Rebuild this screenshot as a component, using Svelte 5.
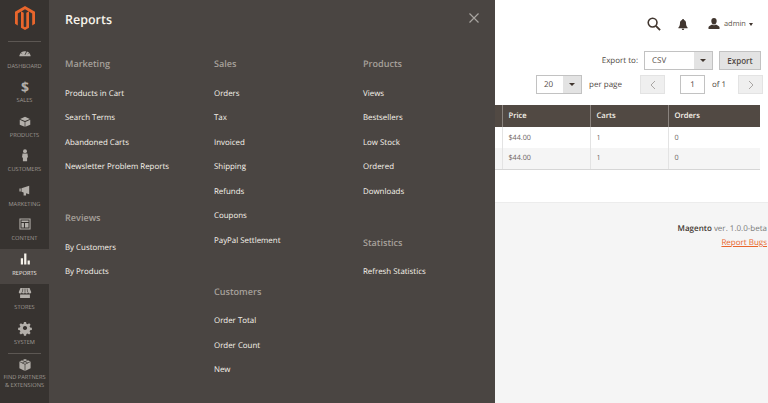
<script>
  const cols = [
    [
      { title: 'Marketing', links: ['Products in Cart', 'Search Terms', 'Abandoned Carts', 'Newsletter Problem Reports'] },
      { title: 'Reviews', links: ['By Customers', 'By Products'] }
    ],
    [
      { title: 'Sales', links: ['Orders', 'Tax', 'Invoiced', 'Shipping', 'Refunds', 'Coupons', 'PayPal Settlement'] },
      { title: 'Customers', links: ['Order Total', 'Order Count', 'New'] }
    ],
    [
      { title: 'Products', links: ['Views', 'Bestsellers', 'Low Stock', 'Ordered', 'Downloads'] },
      { title: 'Statistics', links: ['Refresh Statistics'] }
    ]
  ];
  const nav = ['dashboard', 'sales', 'products', 'customers', 'marketing', 'content', 'reports', 'stores', 'system'];
  const rows = [0, 1];
</script>

<div class="page">
  <aside class="side">
    <div class="logo">
      <svg width="20" height="24" viewBox="0 0 20 24"><path fill="#e9662c" d="M10 0 20 5.800v12L17.200 19.400V7.400L10 3.200 2.800 7.400v12L0 17.800V5.800z"/><path fill="#e9662c" d="M8.700 6.700v13.800L10 21.300l1.300-.8V6.700l2.700-1.500v16.600L10 24l-4-2.200V5.200z"/></svg>
    </div>
    {#each nav as n}
      <div class="nav" class:active={n === 'reports'}>
        <svg class="ico" viewBox="0 0 20 20">
          {#if n === 'dashboard'}
            <path fill="currentColor" d="M2 15a8.300 8.300 0 0 1 16 0v1H2z"/><path stroke="#373330" stroke-width="1.300" d="M10 14l3-6M5 12l1 .6M15 12l-1 .6"/>
          {:else if n === 'sales'}
            <text x="10" y="18" text-anchor="middle" class="dollar">$</text>
          {:else if n === 'products'}
            <path fill="currentColor" d="M10 4l7 3-7 3-7-3zM2.500 8.300l7 3v7l-7-3zM17.500 8.300l-7 3v7l7-3z"/>
          {:else if n === 'customers'}
            <circle cx="10" cy="4.500" r="2.800" fill="currentColor"/><path fill="currentColor" d="M6.500 8h7l.8 5.500h-1.300V19H7v-5.500H5.700z"/>
          {:else if n === 'marketing'}
            <path fill="currentColor" d="M2 8h2v4H2zM5 7.500 16 4v12l-4.500-1.500V18H8v-4.500L5 12.500z"/>
          {:else if n === 'content'}
            <path fill="none" stroke="currentColor" stroke-width="1.500" d="M2.800 2.800h14.400v14.400H2.800z"/><path fill="currentColor" d="M5 5h10v2H5zM5 8.500h3.500V15H5zM10 8.500h5V15h-5z"/>
          {:else if n === 'reports'}
            <path fill="currentColor" d="M4 9h3.200v9H4zM8.800 2H12v16H8.800zM13.700 12h3.200v6h-3.200z"/>
          {:else if n === 'stores'}
            <path fill="currentColor" d="M3.500 3h13l2.500 6a2.300 2.300 0 0 1-4.500 0 2.300 2.300 0 0 1-4.500 0 2.300 2.300 0 0 1-4.500 0A2.300 2.300 0 0 1 1 9zM3 12h14v5H3z"/><path stroke="#373330" stroke-width=".9" d="M7 3.500 6.200 9M10 3.500V9M13 3.500l.8 5.500"/>
          {:else}
            <path fill="currentColor" fill-rule="evenodd" d="M8.500 1.500h3l.5 2.500 1.700.7 2.200-1.400 2.100 2.100-1.400 2.200.7 1.700 2.500.5v3l-2.500.5-.7 1.700 1.400 2.200-2.100 2.100-2.200-1.400-1.700.7-.5 2.500h-3l-.5-2.500-1.700-.7-2.200 1.400-2.100-2.100 1.400-2.200-.7-1.700-2.500-.5v-3l2.500-.5.7-1.700-1.400-2.200 2.100-2.100 2.200 1.400 1.700-.7zM10 7a3 3 0 1 0 .01 0z"/>
          {/if}
        </svg>
        <span>{n.toUpperCase()}</span>
      </div>
    {/each}
    <div class="nav partners">
      <svg class="ico" viewBox="0 0 20 20"><path fill="currentColor" d="M10 1.500 18 5v9.500L10 18.500 2 14.500V5z"/><path stroke="#373330" fill="none" d="M2 5l8 4 8-4M10 9v9.500M6 3.200l8 4M14 3.200l-8 4"/></svg>
      <span>FIND PARTNERS<br />&amp; EXTENSIONS</span>
    </div>
  </aside>

  <section class="panel">
    <header class="panel-head">
      <h2>Reports</h2>
      <svg class="close" width="10" height="10" viewBox="0 0 10 10"><path d="M.5.500l9 9M9.500.500l-9 9" stroke="#a8a4a0" stroke-width="1.200"/></svg>
    </header>
    <div class="cols">
      {#each cols as col}
        <div class="col">
          {#each col as g}
            <div class="group">
              <h3>{g.title}</h3>
              {#each g.links as l}
                <a href="#x">{l}</a>
              {/each}
            </div>
          {/each}
        </div>
      {/each}
    </div>
  </section>

  <main class="main">
    <div class="content">
      <div class="topbar">
        <svg class="search" width="14" height="14" viewBox="0 0 15 15"><circle cx="6" cy="6" r="4.700" fill="none" stroke="#41362f" stroke-width="1.700"/><path d="M9.500 9.500l4.500 4.500" stroke="#41362f" stroke-width="2"/></svg>
        <svg class="bell" width="10" height="11" viewBox="0 0 10 11"><path fill="#41362f" d="M5 0c.6 0 1 .4 1 .9C7.500 1.300 8 2.500 8 4c0 2.500.6 3.500 1.600 4.500v.7H.4v-.7C1.400 7.500 2 6.500 2 4 2 2.500 2.500 1.300 4 .9 4 .4 4.400 0 5 0zM3.800 9.700h2.400C6.200 10.400 5.700 11 5 11s-1.200-.6-1.200-1.300z"/></svg>
        <svg class="user" width="12" height="12" viewBox="0 0 12 12"><path fill="#41362f" d="M6 0c1.700 0 2.700 1.200 2.700 3S7.700 6.500 6 6.500 3.300 4.800 3.300 3 4.300 0 6 0zM4 6.500c1.200 1 2.800 1 4 0 .6.700 3 1.300 3.500 2.500v2H.5V9C1 7.800 3.400 7.200 4 6.500z"/></svg>
        <span class="uname">admin</span>
        <i class="caret small"></i>
      </div>

      <div class="export">
        <span>Export to:</span>
        <div class="select csv"><b>CSV</b><em><i class="caret"></i></em></div>
        <button class="btn">Export</button>
      </div>

      <div class="pager">
        <div class="select per"><b>20</b><em><i class="caret"></i></em></div>
        <span class="pp">per page</span>
        <div class="arrow"><svg width="6" height="10" viewBox="0 0 6 10"><path d="M5 1 1 5l4 4" fill="none" stroke="#a9a6a4"/></svg></div>
        <div class="pageno">1</div>
        <span class="of">of 1</span>
        <div class="arrow next"><svg width="6" height="10" viewBox="0 0 6 10"><path d="m1 1 4 4-4 4" fill="none" stroke="#a9a6a4"/></svg></div>
      </div>

      <table>
        <thead><tr><th class="stub"></th><th class="p">Price</th><th class="c">Carts</th><th class="o">Orders</th></tr></thead>
        <tbody>
          {#each rows as r}
            <tr class:alt={r === 1}><td class="stub"></td><td>$44.00</td><td>1</td><td>0</td></tr>
          {/each}
        </tbody>
      </table>
    </div>
    <footer>
      <p><strong>Magento</strong> ver. 1.0.0-beta</p>
      <a href="#x">Report Bugs</a>
    </footer>
  </main>
</div>

<style>
  :global(body) { margin: 0; background: #fff; }
  .page {
    width: 768px; height: 403px; overflow: hidden; display: flex;
    font-family: "Open Sans", "Noto Sans", sans-serif; color: #41362f;
    text-rendering: geometricPrecision;
  }
  .side { width: 49px; flex: none; background: #373330; display: flex; flex-direction: column; align-items: stretch; }
  .logo { height: 42px; margin: 0 8px; display: flex; justify-content: center; align-items: flex-start; padding-top: 6px; box-sizing: border-box; border-bottom: 1px solid #5c5753; flex: none; }
  .nav {
    height: 34.5px; flex: none; display: flex; flex-direction: column; align-items: center; justify-content: flex-end;
    color: #a09c96; padding-bottom: 7px; box-sizing: border-box; font-size: 5.700px; line-height: 8px; text-align: center; white-space: nowrap;
  }
  .nav .ico { width: 14px; height: 14px; margin-bottom: 3px; color: #b3afaa; overflow: visible; }
  .nav.active { background: #4a4542; color: #f7f3eb; }
  .nav.active .ico { color: #f7f3eb; }
  .dollar { font: 700 20px "Open Sans", sans-serif; fill: currentColor; }
  .partners { height: 44px; justify-content: flex-start; padding-top: 5px; padding-bottom: 0; position: relative; }
  .partners::before { content: ""; position: absolute; top: 0; left: 8px; right: 8px; height: 1px; background: #5c5753; }
  .partners .ico { margin-bottom: 1px; }

  .panel { width: 446px; flex: none; background: #4a4542; box-sizing: border-box; padding: 0 16px; }
  .panel-head { height: 38px; display: flex; justify-content: space-between; align-items: center; }
  .panel-head h2 { margin: 0; font-size: 12.500px; font-weight: 600; color: #f7f3eb; }
  .close { margin-top: -2px; }
  .cols { display: flex; padding-top: 16px; }
  .col { width: 149px; flex: none; }
  .group { margin-bottom: 28.500px; }
  .group h3 { margin: 0 0 7.500px; height: 20px; line-height: 20px; font-size: 9.100px; font-weight: 600; color: #a6a09a; }
  .group a { display: block; height: 24.500px; line-height: 24.500px; font-size: 7.900px; color: #f7f3eb; text-decoration: none; white-space: nowrap; }

  .main { flex: 1; min-width: 0; display: flex; flex-direction: column; }
  .content { height: 202px; flex: none; box-sizing: border-box; }
  .topbar { height: 47px; display: flex; align-items: center; padding: 1px 0 0 152px; box-sizing: border-box; }
  .search { margin-right: 17px; }
  .bell { margin-right: 20px; }
  .user { margin-right: 4px; }
  .uname { font-size: 7.400px; color: #5c5249; margin-right: 3px; }
  .caret { display: block; width: 0; height: 0; border: 3px solid transparent; border-top: 3.500px solid #41362f; border-bottom: 0; }
  .caret.small { border-width: 2.500px; border-top-width: 3px; border-bottom-width: 0; }
  .export { display: flex; align-items: center; height: 19px; justify-content: flex-end; font-size: 8px; padding-right: 7px; margin-top: 4px; }
  .export > span { margin-right: 6px; color: #514943; }
  .select { display: flex; height: 19px; box-sizing: border-box; border: 1px solid #c2c2c2; background: #fff; font-size: 8px; color: #514943; }
  .select b { flex: 1; font-weight: 400; padding-left: 7px; line-height: 17px; }
  .select em { width: 18px; background: #e3e3e3; display: flex; align-items: center; justify-content: center; }
  .csv { width: 69px; margin-right: 6px; }
  .btn { width: 42px; height: 19px; padding: 0; background: #e3e3e3; border: 1px solid #c2c2c2; font: 600 8px "Open Sans", sans-serif; color: #514943; }
  .pager { display: flex; align-items: center; height: 19px; margin-top: 5px; padding-left: 41px; font-size: 8px; color: #514943; }
  .per { width: 46px; }
  .pp { margin-left: 7px; width: 51px; }
  .arrow { width: 25px; height: 19px; background: #efefef; border: 1px solid #e3e3e3; box-sizing: border-box; display: flex; align-items: center; justify-content: center; }
  .pageno { width: 25px; height: 19px; box-sizing: border-box; border: 1px solid #c2c2c2; text-align: center; line-height: 17px; margin-left: 15px; }
  .of { margin-left: 7px; width: 26px; }
  table { border-collapse: collapse; table-layout: fixed; width: 265px; margin-top: 11px; font-size: 7.200px; }
  th { height: 22px; background: #514943; color: #f7f3eb; font-weight: 600; font-size: 7.600px; text-align: left; padding: 0 6px; border-left: 1px solid #8a837e; box-sizing: border-box; }
  td { height: 21px; padding: 0 6px; color: #6b625c; border-left: 1px solid #e3e3e3; box-sizing: border-box; }
  .stub { width: 7px; padding: 0; border-left: 0; }
  .p { width: 88px; }
  .c { width: 78px; }
  tr.alt td { background: #f5f5f5; }
  tbody tr:last-child td { border-bottom: 1px solid #d6d6d6; }
  footer { flex: 1; background: #f5f5f5; border-top: 1px solid #ececec; text-align: right; font-size: 8px; padding: 19px 1px 0 0; color: #7a7a7a; white-space: nowrap; }
  footer p { margin: 0; line-height: 14px; }
  footer strong { font-weight: 600; color: #41362f; }
  footer a { display: block; line-height: 13.500px; color: #e9662c; text-decoration: underline; }
</style>
